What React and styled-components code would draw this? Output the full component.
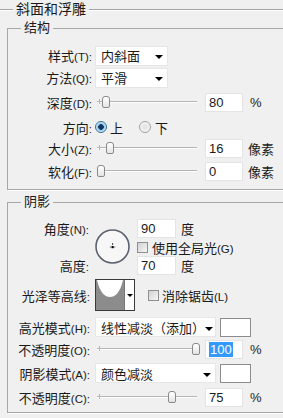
import React from "react";
import styled, { createGlobalStyle } from "styled-components";

const GlobalStyle = createGlobalStyle`
  html, body {
    margin: 0;
    padding: 0;
    background: #f0f0f0;
  }
  body {
    font-family: "Liberation Sans", "Noto Sans CJK SC", sans-serif;
    font-size: 13px;
    color: #1a1a1a;
    overflow: hidden;
  }
`;

const Panel = styled.div`
  width: 283px;
  height: 418px;
  overflow: hidden;
  background: #f0f0f0;
`;

const Header = styled.div`
  display: flex;
  align-items: center;
  gap: 2px;
  width: 320px;
  height: 19px;

  &::before,
  &::after {
    content: "";
    height: 1px;
    background: #a5a5a5;
    border-bottom: 1px solid #fff;
  }
  &::before {
    width: 13px;
  }
  &::after {
    flex: 1;
  }
`;

const HeaderText = styled.span`
  font-size: 14px;
  line-height: 19px;
  padding: 0 1px;
`;

const Group = styled.fieldset`
  margin: ${(p) => p.$top}px 0 0 7px;
  padding: ${(p) => p.$pt}px 0 ${(p) => p.$pb}px 0;
  width: 330px;
  min-inline-size: auto;
  border: 1px solid #a8a8a8;
  box-shadow: 1px 1px 0 #fff;
`;

const Legend = styled.legend`
  margin-left: 13px;
  padding: 0 3px;
  font-size: 13px;
  line-height: 18px;
`;

const Row = styled.div`
  display: flex;
  align-items: center;
  height: ${(p) => p.$h}px;
  margin-top: ${(p) => p.$mt || 0}px;
`;

const Label = styled.span`
  flex-shrink: 0;
  width: ${(p) => p.$w || 84}px;
  margin-right: ${(p) => 87 - (p.$w || 84)}px;
  text-align: right;
  white-space: nowrap;
`;

const Key = styled.span`
  font-size: 11.5px;
`;

const Select = styled.div`
  display: flex;
  align-items: center;
  box-sizing: border-box;
  width: ${(p) => p.$w}px;
  height: 20px;
  padding: 0 4px 0 5px;
  background: #fff;
  border: 1px solid #e6e6e6;
  white-space: nowrap;
`;

const Arrow = styled.span`
  margin-left: auto;
  margin-top: 3px;
  border-left: 4px solid transparent;
  border-right: 4px solid transparent;
  border-top: 4px solid #000;
`;

const Swatch = styled.div`
  box-sizing: border-box;
  width: 31px;
  height: 19px;
  margin-left: 4px;
  background: #fff;
  border: 1px solid #8c8c8c;
`;

const SliderBox = styled.div`
  position: relative;
  flex-shrink: 0;
  width: 100px;
  height: 14px;
  margin-left: 2px;
`;

const Track = styled.div`
  position: absolute;
  left: 0;
  right: 0;
  top: 6px;
  height: 1px;
  background: #b4b4b4;
  border-bottom: 1px solid #fff;

  &::before {
    content: "";
    position: absolute;
    left: 2px;
    top: -2px;
    width: 1px;
    height: 5px;
    background: #b4b4b4;
  }
`;

const Thumb = styled.div`
  position: absolute;
  top: 1px;
  box-sizing: border-box;
  width: 8px;
  height: 12px;
  border: 1px solid #8a8a8a;
  border-radius: 3px 3px 2px 2px;
  background: linear-gradient(#ffffff, #e4e4e4);
`;

const Field = styled.div`
  box-sizing: border-box;
  flex-shrink: 0;
  width: ${(p) => p.$w}px;
  height: 19px;
  margin-left: ${(p) => p.$ml || 0}px;
  padding-left: 3px;
  background: #fff;
  border: 1px solid #e4e4e4;
  line-height: 17px;
`;

const Selected = styled.span`
  background: #3399ff;
  color: #fff;
  padding: 0 1px;
`;

const Unit = styled.span`
  margin-left: ${(p) => p.$ml}px;
  white-space: nowrap;
`;

const Radio = styled.span`
  box-sizing: border-box;
  flex-shrink: 0;
  width: 12px;
  height: 12px;
  margin-left: ${(p) => p.$ml || 0}px;
  border-radius: 50%;
  border: 1px solid ${(p) => (p.$on ? "#3b6d8f" : "#a0a0a0")};
  background: ${(p) =>
    p.$on
      ? "radial-gradient(circle, #16365f 0 2.5px, #7fc3ea 3px, #d6ecf8 5px)"
      : "radial-gradient(circle, #e6e6e6 0 2px, #f7f7f7 5px)"};
`;

const Check = styled.span`
  box-sizing: border-box;
  flex-shrink: 0;
  width: 11px;
  height: 11px;
  margin-left: ${(p) => p.$ml || 0}px;
  border: 1px solid #8e8f8f;
  background: linear-gradient(135deg, #d2d2d2, #f6f6f6);
`;

const Text = styled.span`
  margin-left: ${(p) => p.$ml || 0}px;
  white-space: nowrap;
`;

const AngleGrid = styled.div`
  display: grid;
  grid-template-columns: 81px 48px auto;
  grid-template-rows: 20px 18px 19px;
  align-items: center;
`;

const GridLabel = styled.span`
  text-align: right;
  white-space: nowrap;
`;

const Dial = styled.div`
  grid-column: 2;
  grid-row: 1 / 4;
  align-self: center;
  margin-left: 6px;
  width: 35px;
  height: 35px;
`;

const CellRow = styled.div`
  grid-column: 3;
  display: flex;
  align-items: center;
`;

const Contour = styled.div`
  display: flex;
  box-sizing: border-box;
  width: 40px;
  height: 32px;
  border: 1px solid #3a3a3a;
  background: #fff;
`;

const ContourArrow = styled.div`
  display: flex;
  align-items: center;
  justify-content: center;
  flex: 1;
  border-left: 1px solid #777;
`;

const SmallArrow = styled.span`
  border-left: 3px solid transparent;
  border-right: 3px solid transparent;
  border-top: 3px solid #000;
`;

function Slider({ pos }) {
  return (
    <SliderBox>
      <Track />
      <Thumb style={{ left: pos }} />
    </SliderBox>
  );
}

export default function App() {
  return (
    <Panel>
      <GlobalStyle />
      <Header>
        <HeaderText>斜面和浮雕</HeaderText>
      </Header>

      <Group $top={0} $pt={8} $pb={8}>
        <Legend>结构</Legend>
        <Row $h={21}>
          <Label>样式<Key>(T):</Key></Label>
          <Select $w={73}>
            内斜面
            <Arrow />
          </Select>
        </Row>
        <Row $h={21} $mt={1}>
          <Label>方法<Key>(Q):</Key></Label>
          <Select $w={73}>
            平滑
            <Arrow />
          </Select>
        </Row>
        <Row $h={20} $mt={4}>
          <Label>深度<Key>(D):</Key></Label>
          <Slider pos={5} />
          <Field $w={38} $ml={8}>80</Field>
          <Unit $ml={7}>%</Unit>
        </Row>
        <Row $h={20} $mt={5}>
          <Label>方向<Key>:</Key></Label>
          <Radio $on />
          <Text $ml={3}>上</Text>
          <Radio $ml={16} />
          <Text $ml={4}>下</Text>
        </Row>
        <Row $h={20} $mt={1}>
          <Label>大小<Key>(Z):</Key></Label>
          <Slider pos={9} />
          <Field $w={38} $ml={8}>16</Field>
          <Unit $ml={5}>像素</Unit>
        </Row>
        <Row $h={20} $mt={3}>
          <Label>软化<Key>(F):</Key></Label>
          <Slider pos={0} />
          <Field $w={38} $ml={8}>0</Field>
          <Unit $ml={5}>像素</Unit>
        </Row>
      </Group>

      <Group $top={3} $pt={7} $pb={6}>
        <Legend>阴影</Legend>
        <AngleGrid>
          <GridLabel>角度<Key>(N):</Key></GridLabel>
          <Dial>
            <svg width="35" height="35" viewBox="0 0 35 35">
              <circle cx="17.5" cy="17.5" r="16.5" fill="#f7f7f7" stroke="#5c6170" strokeWidth="1.6" />
              <rect x="16.5" y="17" width="2.2" height="2.2" fill="#000" />
              <rect x="17.2" y="14.2" width="0.9" height="1.6" fill="#000" />
              <rect x="14.8" y="17.6" width="1" height="0.9" fill="#444" />
              <rect x="19.3" y="17.6" width="1" height="0.9" fill="#444" />
            </svg>
          </Dial>
          <CellRow>
            <Field $w={39}>90</Field>
            <Unit $ml={5}>度</Unit>
          </CellRow>
          <span />
          <CellRow>
            <Check />
            <Text $ml={4}>使用全局光<Key>(G)</Key></Text>
          </CellRow>
          <GridLabel>高度<Key>:</Key></GridLabel>
          <CellRow>
            <Field $w={39}>70</Field>
            <Unit $ml={5}>度</Unit>
          </CellRow>
        </AngleGrid>

        <Row $h={32} $mt={4}>
          <Label $w={82}>光泽等高线<Key>:</Key></Label>
          <Contour>
            <svg width="28" height="30" viewBox="0 0 28 30">
              <rect width="28" height="30" fill="#8c8c8c" />
              <path d="M1 0 C4 13, 9 17, 14 17 C19 17, 24 13, 27 0 Z" fill="#fff" />
            </svg>
            <ContourArrow>
              <SmallArrow />
            </ContourArrow>
          </Contour>
          <Check $ml={13} />
          <Text $ml={3}>消除锯齿<Key>(L)</Key></Text>
        </Row>

        <Row $h={20} $mt={6}>
          <Label $w={82}>高光模式<Key>(H):</Key></Label>
          <Select $w={121}>
            线性减淡（添加）
            <Arrow />
          </Select>
          <Swatch />
        </Row>
        <Row $h={18} $mt={3}>
          <Label $w={82}>不透明度<Key>(O):</Key></Label>
          <Slider pos={95} />
          <Field $w={38} $ml={8}>
            <Selected>100</Selected>
          </Field>
          <Unit $ml={7}>%</Unit>
        </Row>
        <Row $h={20} $mt={5}>
          <Label $w={82}>阴影模式<Key>(A):</Key></Label>
          <Select $w={121}>
            颜色减淡
            <Arrow />
          </Select>
          <Swatch />
        </Row>
        <Row $h={18} $mt={5}>
          <Label $w={82}>不透明度<Key>(C):</Key></Label>
          <Slider pos={71} />
          <Field $w={38} $ml={8}>75</Field>
          <Unit $ml={7}>%</Unit>
        </Row>
      </Group>
    </Panel>
  );
}
